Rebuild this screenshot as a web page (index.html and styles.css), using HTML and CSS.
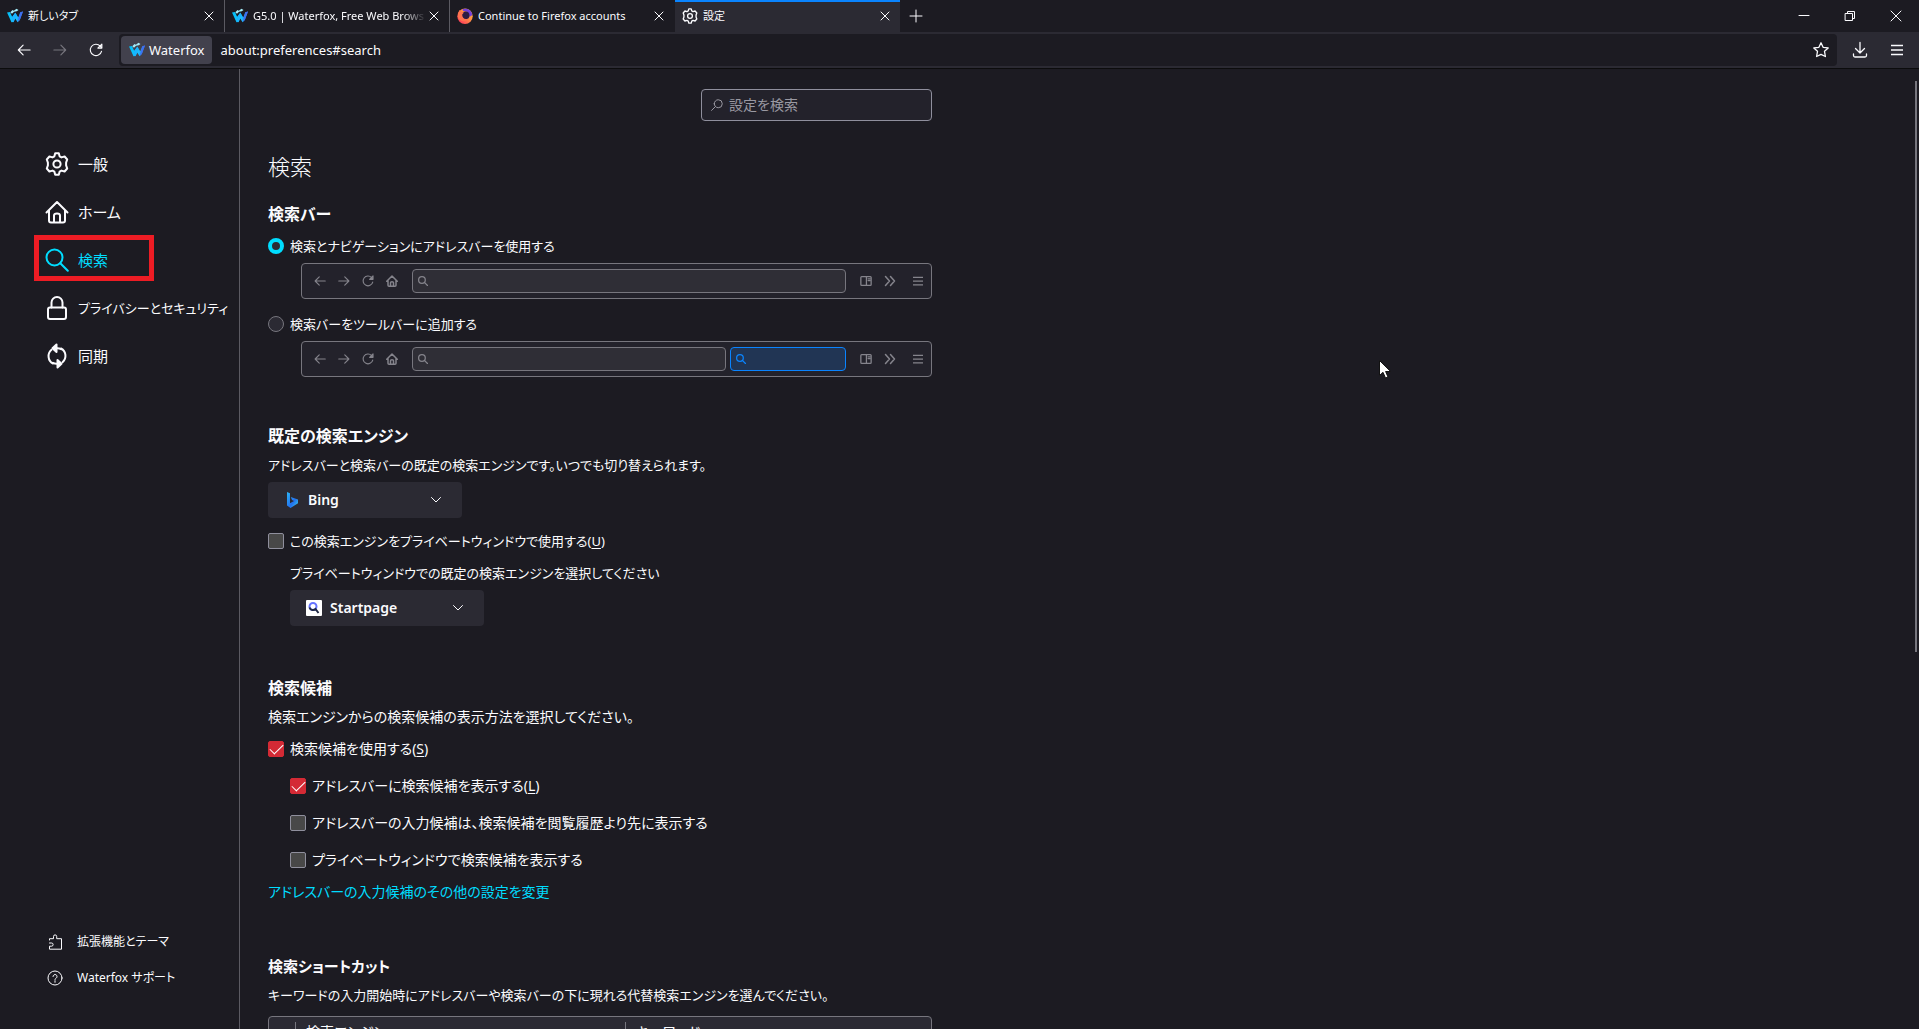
FILE: index.html
```html
<!DOCTYPE html>
<html lang="ja">
<head>
<meta charset="utf-8">
<title>設定</title>
<link rel="stylesheet" href="styles.css">
</head>
<body>
<svg class="defs" aria-hidden="true">
  <defs>
    <linearGradient id="wf" x1="0" y1="0" x2="1" y2="0"><stop offset="0" stop-color="#00bcf5"/><stop offset=".55" stop-color="#18c8ff"/><stop offset="1" stop-color="#3a62e8"/></linearGradient>
    <linearGradient id="ff" x1="1" y1="0" x2="0" y2="1"><stop offset="0" stop-color="#ffc93c"/><stop offset=".45" stop-color="#ff8a45"/><stop offset="1" stop-color="#ff2560"/></linearGradient>
    <linearGradient id="bg" x1="0" y1="0" x2="1" y2="1"><stop offset="0" stop-color="#2bb5f5"/><stop offset=".6" stop-color="#2370ee"/><stop offset="1" stop-color="#38d8e8"/></linearGradient>
    <symbol id="waterfox" viewBox="0 0 16 16"><path d="M0 4.500 3 4l2.200 5L8.300 5l3 4.200L13.300 4.200l2.700-.7-3.200 8.500-2.200 2.200L8.200 10.500 6.500 14l-2 .2z" fill="url(#wf)"/><path d="M5.300 8.800 8.300 4.500l1.500 2.800-3.400 6.900-1.800-.6z" fill="#19b4ff"/><path d="M3.300 4.300 5.500 2l1.300.8L9.500.8 11.500 2l-1.700 1.300-2.800.5-2 2z" fill="#a5ecf8"/><path d="m13.300 4.200 2.700-.7-3.200 8.500-2 1.800z" fill="#3f70f0"/></symbol>
    <symbol id="gear" viewBox="0 0 24 24"><path d="M10.200 1.200h3.600l.8 3.100 1.900 1.100 3.100-.9 2.600 3-1.100 3.100v2.800l1.100 3.100-2.600 3-3.100-.9-1.900 1.100-.8 3.100h-3.600l-.8-3.100-1.900-1.100-3.100.9-2.600-3 1.100-3.100v-2.800L1.800 7.500l2.600-3 3.100.9 1.900-1.100z"/><circle cx="12" cy="12" r="3.600"/></symbol>
    <symbol id="close" viewBox="0 0 10 10"><path d="m1 1 8 8M9 1 1 9"/></symbol>
    <symbol id="back" viewBox="0 0 16 16"><path d="M15 8H1.500M7 2.500 1.500 8 7 13.500"/></symbol>
    <symbol id="forward" viewBox="0 0 16 16"><path d="M1 8h13.500M9 2.500 14.500 8 9 13.500"/></symbol>
    <symbol id="reload" viewBox="0 0 16 16"><path d="M14.300 9.500A6.500 6.500 0 1 1 12.800 3.500L14.500 5.500M14.700 1.200v4.600h-4.600z"/></symbol>
    <symbol id="home" viewBox="0 0 24 24"><path d="M1.500 12.500 12 2l10.500 10.500M4 10.500v10a2 2 0 0 0 2 2h12a2 2 0 0 0 2-2v-10M9 22v-6.500c0-1 1-2 3-2s3 1 3 2V22"/></symbol>
    <symbol id="search" viewBox="0 0 24 24"><circle cx="9.500" cy="9.500" r="8"/><path d="m15.300 15.300 7.500 7.500"/></symbol>
    <symbol id="menu" viewBox="0 0 12 12"><path d="M0 1.500h12M0 6h12M0 10.500h12"/></symbol>
    <symbol id="more" viewBox="0 0 12 12"><path d="m1.500 1.500 4 4.500-4 4.500M6.500 1.500l4 4.500-4 4.500"/></symbol>
    <symbol id="reader" viewBox="0 0 14 12"><rect x="1" y="1" width="12" height="10" rx="1"/><path d="M7.500 1v10M9.500 3.500H12M9.500 5.500H12"/></symbol>
    <symbol id="chevron" viewBox="0 0 12 8"><path d="m1.500 1.500 4.500 4.500 4.500-4.500"/></symbol>
  </defs>
</svg>

<header class="tabbar">
  <div class="tab"><svg class="i16"><use href="#waterfox"/></svg><span class="tab-title">新しいタブ</span><button class="tab-close" aria-label="タブを閉じる"><svg class="i10 line"><use href="#close"/></svg></button></div>
  <div class="tab"><svg class="i16"><use href="#waterfox"/></svg><span class="tab-title fade">G5.0 | Waterfox, Free Web Brows</span><button class="tab-close" aria-label="タブを閉じる"><svg class="i10 line"><use href="#close"/></svg></button></div>
  <div class="tab"><svg class="i16" viewBox="0 0 16 16"><circle cx="8" cy="8.300" r="7.700" fill="url(#ff)"/><path d="M5.500 1.200C8 0 14.500.5 15.300 7l-2.800 2C12.500 5 10 3 6 3z" fill="#7440dc"/><circle cx="8.600" cy="7.300" r="3.900" fill="#2c1b42"/><path d="M1 5.500 2.500 2l1.800 2 2.700.5-1.800 2C5 10 8 12 11 10.500 8 15 2 13 1 9z" fill="#ff7350"/></svg><span class="tab-title">Continue to Firefox accounts</span><button class="tab-close" aria-label="タブを閉じる"><svg class="i10 line"><use href="#close"/></svg></button></div>
  <div class="tab active"><svg class="i16 line gear-small"><use href="#gear"/></svg><span class="tab-title">設定</span><button class="tab-close" aria-label="タブを閉じる"><svg class="i10 line"><use href="#close"/></svg></button></div>
  <button class="new-tab" aria-label="新しいタブを開く"><svg class="i12 line" viewBox="0 0 12 12"><path d="M6 0v12M0 6h12"/></svg></button>
  <div class="window-buttons">
    <button aria-label="最小化"><svg class="i10 line" viewBox="0 0 10 10"><path d="M0 4.500h10"/></svg></button>
    <button aria-label="元に戻す"><svg class="i10 line" viewBox="0 0 10 10"><path d="M.5 2.500h7v7h-7zM2.500 2.500v-2h7v7h-2"/></svg></button>
    <button aria-label="閉じる"><svg class="i10 line" viewBox="0 0 10 10"><path d="m0 0 10 10M10 0 0 10"/></svg></button>
  </div>
</header>

<div class="toolbar">
  <button class="tool" aria-label="戻る"><svg class="i16 line"><use href="#back"/></svg></button>
  <button class="tool dim" aria-label="進む"><svg class="i16 line"><use href="#forward"/></svg></button>
  <button class="tool" aria-label="再読み込み"><svg class="i16 line"><use href="#reload"/></svg></button>
  <div class="urlbar">
    <button class="identity"><svg class="i16"><use href="#waterfox"/></svg>Waterfox</button>
    <input class="url" type="text" value="about:preferences#search" aria-label="アドレス">
    <button class="tool star" aria-label="ブックマーク"><svg class="i16 line" viewBox="0 0 16 16"><path d="m8 .8 2.100 4.500 5.100.6-3.700 3.400.9 5.200L8 12.300l-4.400 2.200.9-5.200L.8 5.900l5.100-.6z"/></svg></button>
  </div>
  <button class="tool end" aria-label="ダウンロード"><svg class="i16 line" viewBox="0 0 16 16"><path d="M8 .5v10.500M3.500 6.500 8 11l4.500-4.500M1.500 12v1.500a1.500 1.500 0 0 0 1.500 1.500h10a1.500 1.500 0 0 0 1.500-1.500V12"/></svg></button>
  <button class="tool end" aria-label="メニュー"><svg class="i12 line"><use href="#menu"/></svg></button>
</div>

<div class="page">
  <nav class="sidebar">
    <a class="cat" href="#general"><svg class="i24 line"><use href="#gear"/></svg>一般</a>
    <a class="cat" href="#home-page"><svg class="i24 line"><use href="#home"/></svg>ホーム</a>
    <a class="cat selected" href="#search-page"><svg class="i24 line"><use href="#search"/></svg>検索</a>
    <a class="cat long" href="#privacy"><svg class="i24 line" viewBox="0 0 24 24"><rect x="3" y="11.500" width="18" height="11.500" rx="2"/><path d="M6.500 11.500V6.500a5.500 5.500 0 0 1 11 0v5"/></svg>プライバシーとセキュリティ</a>
    <a class="cat" href="#sync"><svg class="i24 line" viewBox="0 0 24 24"><path d="M8 19.500A8.300 8.300 0 0 1 6.500 5.800M16 4.500a8.300 8.300 0 0 1 1.500 13.700M9 4.300h3.500a8 8 0 0 1 3.500.8M15 19.700h-3.500a8 8 0 0 1-3.500-.8"/><path d="M11.500.5v7.500L7.500 4.300zM12.500 23.500V16l4 3.700z" fill="currentColor"/></svg>同期</a>
    <div class="side-links">
      <a class="side-link" href="#addons"><svg class="i16 line" viewBox="0 0 16 16"><path d="M2.500 6V4.700h4V2.500a1.600 1.600 0 0 1 3.200 0v2.200h4.800v10.500h-12v-3h2a1.600 1.600 0 0 0 0-3.200h-2"/></svg>拡張機能とテーマ</a>
      <a class="side-link" href="#support"><svg class="i16 line" viewBox="0 0 16 16"><circle cx="8" cy="8" r="7"/><path d="M6 6.500a2 2 0 1 1 3.200 1.600C8.300 8.700 8 9 8 10M8 11v1.300"/></svg>Waterfox サポート</a>
    </div>
  </nav>

  <main class="main">
    <div class="content">
      <label class="finder"><svg class="i12 line"><use href="#search"/></svg><input type="text" placeholder="設定を検索" aria-label="設定を検索"></label>
      <h1>検索</h1>

      <section class="first">
        <h2>検索バー</h2>
        <label class="row compact"><input type="radio" name="bar" checked>検索とナビゲーションにアドレスバーを使用する</label>
        <div class="mock">
          <svg class="i12 line"><use href="#back"/></svg><svg class="i12 line"><use href="#forward"/></svg><svg class="i12 line"><use href="#reload"/></svg><svg class="i12 line bold"><use href="#home"/></svg>
          <div class="mock-fields"><div class="mock-field"><svg class="i10 line bold"><use href="#search"/></svg></div></div>
          <svg class="i12 line"><use href="#reader"/></svg><svg class="i12 line"><use href="#more"/></svg><svg class="i10 line mock-menu"><use href="#menu"/></svg>
        </div>
        <label class="row spaced compact"><input type="radio" name="bar">検索バーをツールバーに追加する</label>
        <div class="mock">
          <svg class="i12 line"><use href="#back"/></svg><svg class="i12 line"><use href="#forward"/></svg><svg class="i12 line"><use href="#reload"/></svg><svg class="i12 line bold"><use href="#home"/></svg>
          <div class="mock-fields"><div class="mock-field"><svg class="i10 line bold"><use href="#search"/></svg></div><div class="mock-field blue"><svg class="i10 line bold"><use href="#search"/></svg></div></div>
          <svg class="i12 line"><use href="#reader"/></svg><svg class="i12 line"><use href="#more"/></svg><svg class="i10 line mock-menu"><use href="#menu"/></svg>
        </div>
      </section>

      <section>
        <h2>既定の検索エンジン</h2>
        <p class="compact">アドレスバーと検索バーの既定の検索エンジンです。いつでも切り替えられます。</p>
        <div class="picker">
          <svg class="i16" viewBox="0 0 16 16"><path d="m3 0 3 1.200v10L10 9 8 8 6.800 5 14 7.500v3.800L6.500 16 3 13.500z" fill="url(#bg)"/></svg>
          <select aria-label="既定の検索エンジン"><option>Bing</option></select>
          <svg class="arrow line"><use href="#chevron"/></svg>
        </div>
        <label class="row compact"><input type="checkbox">この検索エンジンをプライベートウィンドウで使用する(<u>U</u>)</label>
        <div class="indent">
          <label class="row compact" for="private-engine">プライベートウィンドウでの既定の検索エンジンを選択してください</label>
          <div class="picker">
            <svg class="i16" viewBox="0 0 16 16"><rect width="16" height="16" rx="1" fill="#fff"/><circle cx="7" cy="6.500" r="3.500" fill="none" stroke="#6573ff" stroke-width="2"/><path d="M3.500 7.500C4.500 10.500 8 10.500 9.500 9l3 4" fill="none" stroke="#202945" stroke-width="2"/></svg>
            <select id="private-engine"><option>Startpage</option></select>
            <svg class="arrow line"><use href="#chevron"/></svg>
          </div>
        </div>
      </section>

      <section class="lower">
        <h2>検索候補</h2>
        <p>検索エンジンからの検索候補の表示方法を選択してください。</p>
        <label class="row"><input type="checkbox" checked>検索候補を使用する(<u>S</u>)</label>
        <div class="indent">
          <label class="row spaced"><input type="checkbox" checked>アドレスバーに検索候補を表示する(<u>L</u>)</label>
          <label class="row spaced"><input type="checkbox">アドレスバーの入力候補は、検索候補を閲覧履歴より先に表示する</label>
          <label class="row spaced"><input type="checkbox">プライベートウィンドウで検索候補を表示する</label>
        </div>
        <a class="row link" href="#suggestions">アドレスバーの入力候補のその他の設定を変更</a>
      </section>

      <section class="lower">
        <h2 class="long">検索ショートカット</h2>
        <p class="compact">キーワードの入力開始時にアドレスバーや検索バーの下に現れる代替検索エンジンを選んでください。</p>
        <div class="engines">
          <table>
            <thead><tr><th class="tick"></th><th class="engine"><span>検索エンジン</span></th><th><span>キーワード</span></th></tr></thead>
          </table>
        </div>
      </section>
    </div>
    <div class="thumb"></div>
  </main>
</div>
<svg class="cursor" viewBox="0 0 12 19"><path d="M.5.500v15l3.500-3.200 2.500 5.700 2.500-1-2.400-5.500h5z" fill="#fff" stroke="#111"/></svg>
</body>
</html>
```

FILE: styles.css
```css
*, *::before, *::after { box-sizing: border-box; }

body {
  display: flex;
  flex-direction: column;
  height: 100vh;
  margin: 0;
  overflow: hidden;
  background: #1c1b22;
  color: #fbfbfe;
  font-family: "Noto Sans", "Noto Sans CJK JP", sans-serif;
  font-size: 14px;
  line-height: 24px;
  font-feature-settings: "palt";
}

button, input, select {
  margin: 0;
  padding: 0;
  border: 0;
  background: none;
  color: inherit;
  font: inherit;
  font-feature-settings: inherit;
}

svg { display: block; flex: none; }
.defs { position: absolute; width: 0; height: 0; }
.line { fill: none; stroke: currentColor; stroke-width: 1; stroke-linecap: round; stroke-linejoin: round; overflow: visible; }
.i10 { width: 10px; height: 10px; }
.i12 { width: 12px; height: 12px; }
.i16 { width: 16px; height: 16px; }
.i24 { width: 24px; height: 24px; }
.bold { stroke-width: 3; }
.compact { font-size: 13px; }

.tabbar { display: flex; flex: none; height: 32px; font-size: 11px; }
.tab {
  display: flex;
  align-items: center;
  width: 225px;
  padding: 0 7px;
  border-right: 1px solid #5b5a62;
}
.tab:nth-child(3) { border-right-color: transparent; }
.tab.active { background: #2b2a33; border-right: 0; border-top: 2px solid #0a84ff; padding-bottom: 2px; }
.tab-title { flex: 1; margin-left: 5px; overflow: hidden; white-space: nowrap; }
.fade { mask-image: linear-gradient(to left, transparent, #000 24px); }
.tab-close { display: grid; place-items: center; width: 16px; height: 20px; }
.gear-small { stroke-width: 2; }
.new-tab { display: grid; place-items: center; width: 32px; }
.window-buttons { display: flex; margin-left: auto; }
.window-buttons button { display: grid; place-items: center; width: 46px; }

.toolbar {
  display: flex;
  flex: none;
  align-items: center;
  height: 37px;
  padding: 0 4px 0 6px;
  background: #2b2a33;
  border-bottom: 1px solid #0c0c0d;
}
.tool { display: grid; place-items: center; width: 36px; height: 32px; }
.tool.end { width: 37px; }
.tool.star { width: 32px; }
.tool.dim { color: #77767e; }
.tool .line { stroke-width: 1.3; }
.tool .i16:not([viewBox]) { width: 14px; height: 14px; }
.urlbar {
  display: flex;
  flex: 1;
  align-items: center;
  height: 32px;
  margin: 0 4px 0 5px;
  padding-left: 2px;
  background: #1c1b22;
  border-radius: 4px;
  font-size: 13px;
}
.identity {
  display: flex;
  align-items: center;
  gap: 4px;
  height: 28px;
  padding: 0 8px;
  background: #42414d;
  border-radius: 4px;
}
.url { flex: 1; padding-left: 8px; }

.page { display: flex; flex: 1; min-height: 0; }
.sidebar {
  display: flex;
  flex: none;
  flex-direction: column;
  width: 240px;
  padding: 71px 0 33px;
  border-right: 1px solid #5b5a62;
}
.cat {
  display: flex;
  position: relative;
  align-items: center;
  height: 48px;
  padding-left: 45px;
  gap: 9px;
  color: inherit;
  font-size: 15px;
  text-decoration: none;
  white-space: nowrap;
}
.cat.long { font-size: 13px; }
.cat .line { stroke-width: 2; }
.cat.selected { color: #00ddff; }
.cat.selected::after {
  content: "";
  position: absolute;
  left: 34px;
  top: -1px;
  width: 120px;
  height: 46px;
  border: 5px solid #ed1c24;
}
.side-links { margin-top: auto; }
.side-link {
  display: flex;
  align-items: center;
  height: 36px;
  padding-left: 47px;
  gap: 14px;
  color: inherit;
  font-size: 12px;
  text-decoration: none;
}

.main { position: relative; flex: 1; overflow-y: auto; padding: 20px 28px 0; scrollbar-width: none; }
.content { max-width: 664px; }
.thumb { position: absolute; top: 12px; right: 2px; width: 2px; height: 571px; background: #77767e; }

.finder {
  display: flex;
  align-items: center;
  width: 231px;
  height: 32px;
  margin-left: auto;
  padding: 0 9px;
  gap: 6px;
  background: #23222b;
  border: 1px solid #8f8f9d;
  border-radius: 4px;
  color: #9a99a2;
}
.finder svg { stroke-width: 2; transform: scaleX(-1); }
.finder input { flex: 1; min-width: 0; }
.finder input::placeholder { color: #9a99a2; }

h1 { margin: 30px 0 0; font-size: 22px; font-weight: 300; line-height: 30px; }
h2 { margin: 0; font-size: 16px; font-weight: 600; line-height: 24px; }
h2.long { font-size: 15px; }
section { padding-top: 47px; }
section.first { padding-top: 21px; }
section.lower { padding-top: 50px; }
p { margin: 5px 0; white-space: nowrap; }
.row { display: flex; align-items: center; margin-top: 8px; white-space: nowrap; }
.row.spaced { margin-top: 13px; }
.picker + .row { margin-top: 11px; }
.row input { margin-right: 6px; }
.indent { padding-left: 22px; }
.link { width: fit-content; color: #00ddff; text-decoration: none; }
u { text-underline-offset: 2px; }

input[type="radio"] {
  appearance: none;
  width: 16px;
  height: 16px;
  background: #2b2a33;
  border: 1px solid #77767e;
  border-radius: 50%;
}
input[type="radio"]:checked { border: 4px solid #00ddff; }
input[type="checkbox"] {
  appearance: none;
  display: grid;
  place-items: center;
  width: 16px;
  height: 16px;
  background: #484848;
  border: 1px solid #8f8f9d;
  border-radius: 2px;
}
input[type="checkbox"]:checked { background: #d42a35; border-color: #d42a35; }
input[type="checkbox"]:checked::before {
  content: "";
  width: 13px;
  height: 7px;
  margin-top: -4px;
  border: solid #fff;
  border-width: 0 0 1px 1px;
  transform: rotate(-45deg);
}

.mock {
  display: flex;
  align-items: center;
  height: 36px;
  margin: 5px 0 0 33px;
  padding: 0 8px 0 12px;
  gap: 12px;
  background: #23222b;
  border: 1px solid #77767e;
  border-radius: 4px;
  color: #85848c;
}
.mock .line { stroke-width: 1.5; }
.mock .bold { stroke-width: 3; }
.mock-fields { display: flex; flex: 1; gap: 4px; margin: 0 2px; }
.mock-menu { margin-left: 5px; }
.mock-field {
  display: flex;
  flex: 1;
  align-items: center;
  height: 24px;
  padding-left: 5px;
  background: #2f2e36;
  border: 1px solid #77767e;
  border-radius: 4px;
}
.mock-field.blue { flex: none; width: 116px; background: #213554; border-color: #0a84ff; color: #0a84ff; }

.picker { display: grid; align-items: center; width: 194px; height: 36px; margin-top: 5px; }
.picker > * { grid-area: 1 / 1; }
.picker select {
  appearance: none;
  width: 100%;
  height: 36px;
  padding-left: 40px;
  background: #2b2a33;
  border-radius: 4px;
  font-weight: 600;
}
.picker .i16 { z-index: 1; margin-left: 16px; }
.picker .arrow { z-index: 1; justify-self: end; width: 12px; height: 8px; margin-right: 20px; }

.engines { margin-top: 9px; background: #2b2a33; border: 1px solid #77767e; border-radius: 4px 4px 0 0; }
table { width: 100%; border-collapse: collapse; table-layout: fixed; }
th { padding: 5px 0; font-weight: 400; text-align: left; vertical-align: top; }
th span { display: block; padding-left: 10px; border-left: 1px solid #77767e; line-height: 20px; }
.tick { width: 26px; }
.engine { width: 330px; }

.cursor { position: absolute; left: 1379px; top: 360px; width: 12px; height: 19px; }
```
